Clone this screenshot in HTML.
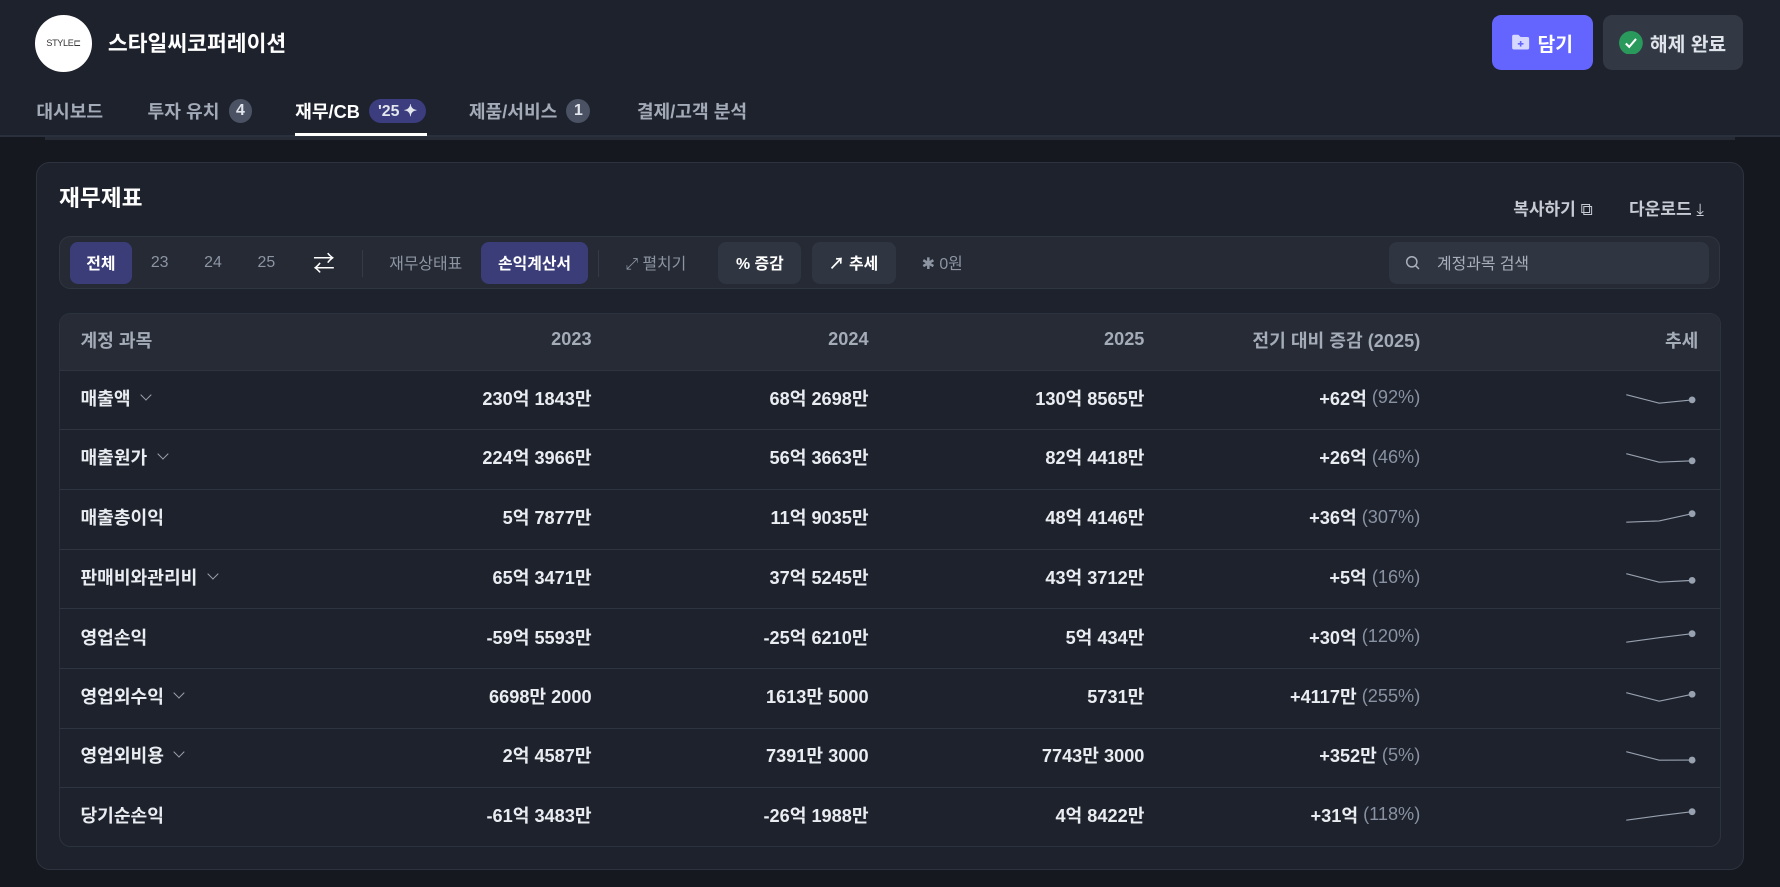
<!DOCTYPE html>
<html><head><meta charset="utf-8"><style>
*{box-sizing:border-box;margin:0;padding:0}
html,body{background:#15181f;overflow:hidden}
body{zoom:1.1352;width:1568px;height:781px;font-family:"Liberation Sans","Noto Sans CJK KR",sans-serif;color:#e6e9ee;position:relative}
.hdr{position:absolute;left:0;top:0;width:1568px;height:121px;background:#1e222c;border-bottom:2px solid #2b313c}
.shadow{position:absolute;left:40px;top:121px;width:1488px;height:2px;background:#262b35}
.logo{position:absolute;left:31px;top:13px;width:50px;height:50px;border-radius:50%;background:#fff;color:#333;font-size:8px;display:flex;align-items:center;justify-content:center;letter-spacing:-.3px}
.name{position:absolute;left:95px;top:24px;font-size:19px;font-weight:700;color:#fff}
.btn{position:absolute;top:13px;height:49px;border-radius:8px;display:flex;align-items:center;justify-content:center;font-size:17px;font-weight:700;gap:6px}
.tabs{position:absolute;top:86px;left:32px;font-size:16px;font-weight:700;color:#a3abb8}
.tab{position:absolute;white-space:nowrap;display:flex;align-items:center;gap:8px}
.bd{display:inline-flex;align-items:center;justify-content:center;min-width:21px;height:21px;border-radius:11px;background:#4a5263;color:#e3e6ec;font-size:14px;padding:0 5px}
.card{position:absolute;left:32px;top:143px;width:1504px;height:623px;background:#1e222c;border:1px solid #2d333e;border-radius:12px}
.tb{position:absolute;left:52px;top:208px;width:1463px;height:47px;background:#252a35;border:1px solid #30363f;border-radius:10px;font-size:14px;color:#8d95a3}
.tb span{position:absolute;top:0;height:100%;display:flex;align-items:center}
.pill{position:absolute;top:4px;height:37px;border-radius:7px;display:flex;align-items:center;justify-content:center;font-weight:700;color:#fff}
.tbl{position:absolute;left:52px;top:276px;width:1464px;height:470px;border:1px solid #2d333e;border-radius:10px;overflow:hidden}
.row{position:absolute;left:0;width:100%;border-top:1px solid #2f3540;font-size:16px;font-weight:700;color:#e9ecf0}
.row div{position:absolute;top:-2px;height:100%;display:flex;align-items:center;white-space:nowrap}
.r{justify-content:flex-end}
.g{color:#8892a3;font-weight:400}
.ch{display:inline-block;width:7px;height:7px;border-right:1.4px solid #9aa2ae;border-bottom:1.4px solid #9aa2ae;transform:rotate(45deg);margin:-5px 0 0 10px}
</style></head><body>
<div class="hdr"></div><div class="shadow"></div>
<div class="logo">STYLE⊏</div>
<div class="name">스타일씨코퍼레이션</div>
<div class="btn" style="left:1314px;width:89px;background:#6464ff;color:#fff"><svg width="17" height="16" viewBox="0 0 17 16"><path d="M1 3a1.5 1.5 0 0 1 1.5-1.5h4l2 2h6a1.5 1.5 0 0 1 1.5 1.5v8a1.5 1.5 0 0 1-1.5 1.5h-12A1.5 1.5 0 0 1 1 13z" fill="#d6d8ff"/><path d="M8.5 7v5M6 9.5h5" stroke="#6464ff" stroke-width="1.4"/></svg>담기</div>
<div class="btn" style="left:1412px;width:123px;background:#323844;color:#dfe3ea"><svg width="21" height="21" viewBox="0 0 21 21"><circle cx="10.5" cy="10.5" r="10.5" fill="#2a9a5c"/><path d="M6 11l3 3 6-7" stroke="#fff" stroke-width="1.8" fill="none"/></svg>해제 완료</div>
<div class="tabs">
<div class="tab" style="left:0;top:0">대시보드</div>
<div class="tab" style="left:98px;top:0">투자 유치 <span class="bd">4</span></div>
<div class="tab" style="left:228px;top:0;color:#fff">재무/CB <span class="bd" style="background:#3b3d7e;padding:0 8px;border-radius:11px">'25 ✦</span></div>
<div class="tab" style="left:381px;top:0">제품/서비스 <span class="bd">1</span></div>
<div class="tab" style="left:529px;top:0">결제/고객 분석</div>
</div>
<div style="position:absolute;left:260px;top:117px;width:116px;height:3px;background:#fff"></div>
<div class="card"></div>
<div style="position:absolute;left:52px;top:159px;font-size:20px;font-weight:700;color:#fff">재무제표</div>
<div style="position:absolute;left:1333px;top:172px;font-size:15px;font-weight:700;color:#c7ccd4">복사하기 <span style="font-weight:400">⧉</span></div>
<div style="position:absolute;left:1435px;top:172px;font-size:15px;font-weight:700;color:#c7ccd4">다운로드 <span style="font-weight:400">⤓</span></div>
<div class="tb">
<div class="pill" style="left:9px;width:54px;background:#3b3d79">전체</div>
<span style="left:80px">23</span><span style="left:127px">24</span><span style="left:174px">25</span>
<span style="left:223px;color:#fff;font-size:19px">⇄</span>
<div style="position:absolute;left:266px;top:11px;width:1px;height:24px;background:#353b46"></div>
<span style="left:290px">재무상태표</span>
<div class="pill" style="left:371px;width:94px;background:#3b3d79">손익계산서</div>
<div style="position:absolute;left:474px;top:11px;width:1px;height:24px;background:#353b46"></div>
<span style="left:498px">⤢&nbsp;펼치기</span>
<div class="pill" style="left:580px;width:73px;background:#303641">% 증감</div>
<div class="pill" style="left:662px;width:74px;background:#303641">↗ 추세</div>
<span style="left:759px">✱ 0원</span>
<div style="position:absolute;left:1171px;top:4px;width:282px;height:37px;border-radius:7px;background:#2f3541;display:flex;align-items:center;padding-left:14px;color:#a9b0bc"><svg width="14" height="14" viewBox="0 0 14 14" style="margin-right:14px"><circle cx="6" cy="6" r="4.5" stroke="#a9b0bc" stroke-width="1.3" fill="none"/><path d="M9.3 9.3l3 3" stroke="#a9b0bc" stroke-width="1.3"/></svg>계정과목 검색</div>
</div>
<div class="tbl">
<div class="row" style="top:0;height:49px;background:#262b36;border:none;color:#a4acb8">
<div style="left:18px">계정 과목</div><div class="r" style="right:994px">2023</div><div class="r" style="right:750px">2024</div><div class="r" style="right:507px">2025</div><div class="r" style="right:264px">전기 대비 증감 (2025)</div><div class="r" style="right:19px">추세</div></div>
</div>
<script>
var d=[["매출액",1,"230억 1843만","68억 2698만","130억 8565만","+62억","92%",[3,13,9.1]],
["매출원가",1,"224억 3966만","56억 3663만","82억 4418만","+26억","46%",[3,13,11.4]],
["매출총이익",0,"5억 7877만","11억 9035만","48억 4146만","+36억","307%",[13,11.6,3]],
["판매비와관리비",1,"65억 3471만","37억 5245만","43억 3712만","+5억","16%",[3,13,10.9]],
["영업손익",0,"-59억 5593만","-25억 6210만","5억 434만","+30억","120%",[13,7.7,3]],
["영업외수익",1,"6698만 2000","1613만 5000","5731만","+4117만","255%",[3,13,4.9]],
["영업외비용",1,"2억 4587만","7391만 3000","7743만 3000","+352만","5%",[3,13,12.8]],
["당기순손익",0,"-61억 3483만","-26억 1988만","4억 8422만","+31억","118%",[13,7.7,3]]];
var tops=[49,101,154,207,259,312,364,416],h="";
function m(v){return (5+(v-3)*0.75).toFixed(1);}
d.forEach(function(r,i){var p=r[7].map(m);var H=(i<7?tops[i+1]:469)-tops[i];
h+='<div class="row" style="top:'+tops[i]+'px;height:'+H+'px"><div style="left:18px">'+r[0]+(r[1]?'<span class="ch"></span>':'')+'</div><div class="r" style="right:994px">'+r[2]+'</div><div class="r" style="right:750px">'+r[3]+'</div><div class="r" style="right:507px">'+r[4]+'</div><div class="r" style="right:264px">'+r[5]+'&nbsp;<span class="g">('+r[6]+')</span></div><div style="left:1378px;top:0"><svg width="64" height="20" viewBox="0 0 64 20"><polyline points="2,'+p[0]+' 31,'+p[1]+' 60,'+p[2]+'" fill="none" stroke="#98a1b0" stroke-width="1"/><circle cx="60" cy="'+p[2]+'" r="3" fill="#98a1b0"/></svg></div></div>';});
document.querySelector('.tbl').insertAdjacentHTML('beforeend',h);
</script>
</body></html>
